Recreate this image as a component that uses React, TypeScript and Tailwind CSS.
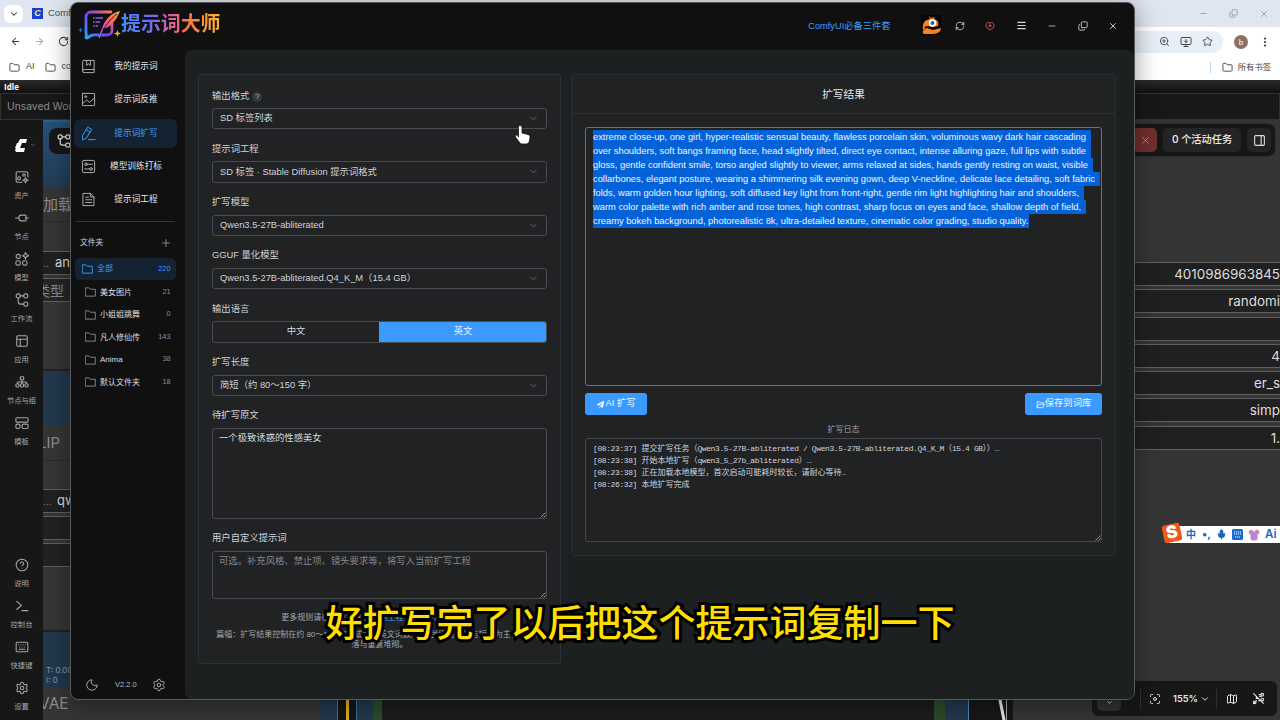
import React from "react";
import {
  ArrowLeft, ArrowRight, RotateCw, ChevronDown, Folder, ZoomIn, MonitorDown, Star, MoreVertical, X, Minus,
  PanelsTopLeft, HelpCircle, Keyboard, Settings, PanelRight,
  Map as MapIcon, Menu, RefreshCw, Copy, Plus, Moon, Mic, Shirt, Focus,
} from "lucide-react";

const ic = { fill: "none", stroke: "currentColor", strokeLinecap: "round", strokeLinejoin: "round" } as const;

function NavIcon({ kind }: { kind: string }) {
  return (
    <svg viewBox="0 0 16 16" width="15" height="15" {...ic} strokeWidth="1">
      {kind === "book" && (<><path d="M3 1.500h11v13H3.200A1.400 1.400 0 0 1 1.800 13V2.700C1.800 2 2.300 1.500 3 1.500z" /><path d="M1.800 12.600c0-.8.6-1.400 1.400-1.400H14M6 1.500v5.300l2-1.600 2 1.600V1.500" /></>)}
      {kind === "image" && (<><rect x="1.500" y="1.500" width="13" height="13" rx=".5" /><path d="M1.500 12.500l4.500-4 3 2.500 5.500-4.500" /><circle cx="5" cy="5" r="1" /></>)}
      {kind === "edit" && (<><path d="M7.500 1.500l4 2-6 9.700-3.700 1.600-.2-4z M5.800 4.400l4 2.200M8 14.500h7" /></>)}
      {kind === "train" && (<><rect x="1.500" y="1.500" width="13" height="13" rx="1.500" /><circle cx="5.300" cy="5.600" r="1.400" /><circle cx="10.700" cy="10.600" r="1.400" /><path d="M6.700 5.600h5.500M3.800 10.600h5.500" /></>)}
      {kind === "doc" && (<><path d="M2.500 1.500h7.500l3.800 3.800v9.200H2.500zM10 1.500v3.800h3.800M5 5.500h3M5 8.300h6.500M5 11.200h6.500" /></>)}
    </svg>
  );
}

const nav = [
  ["book", "我的提示词"], ["image", "提示词反推"], ["edit", "提示词扩写"], ["train", "模型训练打标"], ["doc", "提示词工程"],
];
const folders: [string, string][] = [["美女图片", "21"], ["小姐姐跳舞", "0"], ["凡人修仙传", "143"], ["Anima", "38"], ["默认文件夹", "18"]];

function FolderIcon() {
  return (
    <svg viewBox="0 0 16 14" width="11" height="10" {...ic} strokeWidth="1.300">
      <path d="M1 1h5l1.800 2H15v10H1z" />
    </svg>
  );
}

function Field({ label, children, tip }: { label: string; children: React.ReactNode; tip?: boolean }) {
  return (
    <div className="mb-[12px]">
      <div className="mb-[4px] flex h-[16px] items-center pt-[1px] text-[9.33px] text-[#cfd3dc]">
        {label}
        {tip && <span className="ml-[3px] flex h-[10px] w-[10px] items-center justify-center rounded-full bg-[#36383a] text-[8px] text-[#b5b8bd]">?</span>}
      </div>
      {children}
    </div>
  );
}

function Select({ value }: { value: string }) {
  return (
    <div className="flex h-[21.33px] items-center justify-between rounded-[3px] border border-[#4a4c50] pl-[7px] pr-[7px] pt-[1px] text-[9.33px] text-[#cfd3dc]">
      <span className="whitespace-pre">{value}</span>
      <ChevronDown size={11} strokeWidth={1.500} className="-mt-px text-[#85888e]" />
    </div>
  );
}

function Grip() {
  return (
    <svg width="6" height="6" viewBox="0 0 6 6" className="self-end" stroke="#b0b0b0" strokeWidth=".8"><path d="M0.500 5.500l5-5M3.500 5.500l2-2" /></svg>
  );
}

const lines: [string, string, string][] = [
  ["extreme close-up, one girl, hyper-realistic sensual beauty, flawless porcelain skin, voluminous wavy dark hair cascading", "w-[493px]", "w-[498px]"],
  ["over shoulders, soft bangs framing face, head slightly tilted, direct eye contact, intense alluring gaze, full lips with subtle", "w-[493px]", "w-[498px]"],
  ["gloss, gentle confident smile, torso angled slightly to viewer, arms relaxed at sides, hands gently resting on waist, visible", "w-[495px]", "w-[500px]"],
  ["collarbones, elegant posture, wearing a shimmering silk evening gown, deep V-neckline, delicate lace detailing, soft fabric", "w-[502px]", "w-[507px]"],
  ["folds, warm golden hour lighting, soft diffused key light from front-right, gentle rim light highlighting hair and shoulders,", "w-[486px]", "w-[491px]"],
  ["warm color palette with rich amber and rose tones, high contrast, sharp focus on eyes and face, shallow depth of field,", "w-[488px]", "w-[493px]"],
  ["creamy bokeh background, photorealistic 8k, ultra-detailed texture, cinematic color grading, studio quality.", "w-[435px]", "w-[436px]"],
];

function M({ children }: { children: string }) {
  return <span className="whitespace-pre tracking-[-0.4px]">{children}</span>;
}

function AppWindow() {
  return (
    <div className="absolute left-[70px] top-[2px] flex h-[698px] w-[1065px] flex-col overflow-hidden rounded-[8px] border border-[#58595a] bg-[#101010] font-['Liberation_Sans','Noto_Sans_CJK_SC',sans-serif] shadow-[0_4px_24px_rgba(0,0,0,0.4)]">
      <header className="flex h-[47px] shrink-0 items-center justify-between pl-[7px] pr-[16px]">
        <div className="flex items-center">
          <svg width="44" height="34" viewBox="0 0 44 34" fill="none" className="-mt-[4px]">
            <defs>
              <linearGradient id="frame" x1="0" y1="1" x2="1" y2="0"><stop stopColor="#22aaff" /><stop offset=".5" stopColor="#7b3df0" /><stop offset="1" stopColor="#ff7a4a" /></linearGradient>
              <linearGradient id="quill" x1="0" y1="1" x2="1" y2="0"><stop stopColor="#e33fd0" /><stop offset=".5" stopColor="#ff6a50" /><stop offset="1" stopColor="#ffb52e" /></linearGradient>
            </defs>
            <path d="M33 4H13c-3 0-5 2-5 5v15c0 2 1 3 0 5 0 2 2 1 4-1 3-2 6-1 9-1h8c3 0 5-2 5-5v-6" stroke="url(#frame)" strokeWidth="2.800" strokeLinecap="round" />
            <path d="M15 10h10M15 14h7M15 18h5" stroke="#8a5cf5" strokeWidth="1.400" strokeDasharray="1.500 1 8" />
            <path d="M42 3c-9 2-16 9-18 18 8-1 14-8 18-18z" fill="url(#quill)" />
            <path d="M39 6c-7 5-13 13-17 23" stroke="#2a1040" strokeWidth="1" />
            <path d="M21 30l3.500-9" stroke="#7d7bff" strokeWidth="1.300" />
            <path d="M2.500 19.500l.6 1.900 1.900.6-1.900.6-.6 1.900-.6-1.900L0 22l1.900-.6z" fill="#238dff" />
            <path d="M39.500 22l.9 2.600 2.600.9-2.600.9-.9 2.600-.9-2.600-2.600-.9 2.600-.9z" fill="#ffad2c" />
          </svg>
          <span className="-ml-[1px] -mt-[4px] bg-[linear-gradient(90deg,#3f8cff_0%,#6a6cf2_30%,#e0609a_52%,#ff7a3c_68%,#ffb12e_100%)] bg-clip-text text-[19.9px] font-bold text-transparent">提示词大师</span>
        </div>
        <div className="flex items-center text-[#d5d5d5]">
          <span className="mr-[30px] text-[9.25px] text-[#409eff]">ComfyUI必备三件套</span>
          <svg width="20" height="20" viewBox="0 0 20 20" className="mr-[14px] -mt-[3px]">
            <rect width="20" height="20" rx="2" fill="#050505" />
            <path d="M8 .5l2 2.500 4-1-1 2c4 1 5 4 4 7l-5 1-5-1-4 1 2 2-3 1C1 10 3 6 6 5l3-1z" fill="#f58220" />
            <path d="M3 15l3-2 6 2 8-2c0 3-3 6-8 6H3C1 18 1 16 3 15z" fill="#f58220" />
            <circle cx="11.500" cy="8" r="3.700" fill="#fff" /><circle cx="11.500" cy="8" r="2" fill="#1b62b4" />
          </svg>
          <div className="-mt-[2px] flex items-center gap-[20.500px]">
            <RefreshCw size={10} strokeWidth={2} />
            <svg width="10" height="10" viewBox="0 0 20 20" {...ic} strokeWidth="1.900" stroke="#e05252"><path d="M10 4C8 1.500 2 2.500 2 8.500c0 5 4 7.500 8 9.500 4-2 8-4.500 8-9.500C18 2.500 12 1.500 10 4zM10 7v5M7.500 9.500h5" /></svg>
            <Menu size={11} strokeWidth={2.600} />
            <Minus size={10} strokeWidth={1.800} />
            <Copy size={10} strokeWidth={2} className="-scale-y-100" />
            <X size={10} strokeWidth={2.200} />
          </div>
        </div>
      </header>
      <div className="flex min-h-0 flex-1">
        <aside className="flex w-[114px] shrink-0 flex-col pl-[3px]">
          <nav className="flex flex-col gap-[4.330px] pt-[2px]">
            {nav.map(([k, t], i) => (
              <div key={k} className={"flex h-[29px] w-[103px] items-center rounded-[6px] pl-[7px] text-[8.670px] " + (i === 2 ? "bg-[#142231] text-[#409eff]" : "text-[#e3e6eb]")}>
                <span className={i === 2 ? "" : "text-[#b3b6ba]"}><NavIcon kind={k} /></span>
                <span className="flex-1 pr-px text-center">{t}</span>
              </div>
            ))}
          </nav>
          <div className="ml-[2px] mt-[6.500px] w-[99px] border-t border-[#36383a]" />
          <div className="mt-[13px] flex h-[16px] items-center justify-between pl-[6px] pr-[13px] text-[7.700px] text-[#d0d3d8]">
            文件夹<Plus size={12} strokeWidth={1.500} className="text-[#a3a6ad]" />
          </div>
          <div className="ml-px mt-[7.500px] flex h-[21.500px] w-[101px] items-center rounded-[5px] bg-[#142231] pl-[7px] pr-[5.500px] text-[8px] text-[#409eff]">
            <FolderIcon /><span className="ml-[4px] flex-1">全部</span><span className="text-[7.300px]">220</span>
          </div>
          <div className="mt-px flex flex-col">
            {folders.map(([n, c]) => (
              <div key={n} className="ml-px flex h-[22.600px] w-[101px] items-center pl-[10px] pr-[5.500px] text-[8px] text-[#dcdfe5]">
                <span className="text-[#8b8e94]"><FolderIcon /></span><span className="ml-[4px] flex-1 pt-px">{n}</span><span className="text-[7.300px] text-[#8b8e94]">{c}</span>
              </div>
            ))}
          </div>
          <div className="mb-[7px] mt-auto flex items-center pl-[11px] text-[8px] text-[#b8bbc0]">
            <Moon size={14} strokeWidth={1.500} /><span className="ml-[16px] w-[31px] text-[7.500px]">V2.2.0</span><Settings size={14} strokeWidth={1.500} className="ml-[6px]" />
          </div>
        </aside>
        <main className="flex flex-1 items-start gap-[10px] rounded-l-[6px] rounded-tr-[6px] bg-[#1d2021] pl-[13px] pt-[24px]">
          <section className="h-[590px] w-[363px] shrink-0 rounded-[3px] border border-[#303335] bg-[#212224] px-[13px] pt-[13px]">
            <Field label="输出格式" tip><Select value="SD 标签列表" /></Field>
            <Field label="提示词工程"><Select value="SD 标签 · Stable Diffusion 提示词格式" /></Field>
            <Field label="扩写模型"><Select value="Qwen3.5-27B-abliterated" /></Field>
            <Field label="GGUF 量化模型"><Select value="Qwen3.5-27B-abliterated.Q4_K_M（15.4 GB）" /></Field>
            <Field label="输出语言">
              <div className="flex h-[21.330px] overflow-hidden rounded-[3px] border border-[#4a4c50] text-[9.330px] text-[#d6d9de]">
                <span className="flex w-[166px] items-center justify-center pt-px">中文</span>
                <span className="-my-px -mr-px flex flex-1 items-center justify-center bg-[#3b9aff] pt-px text-[#e9f4ff]">英文</span>
              </div>
            </Field>
            <Field label="扩写长度"><Select value="简短（约 80～150 字）" /></Field>
            <Field label="待扩写原文">
              <div className="flex h-[90.670px] justify-between rounded-[3px] border border-[#4a4c50] pl-[6px] pt-[3px] text-[9.330px] text-[#d6d9de]">一个极致诱惑的性感美女<Grip /></div>
            </Field>
            <Field label="用户自定义提示词">
              <div className="flex h-[48px] justify-between rounded-[3px] border border-[#4a4c50] pl-[6px] pt-[3px] text-[9.330px] text-[#85888e]">可选。补充风格、禁止项、镜头要求等，将写入当前扩写工程<Grip /></div>
            </Field>
            <p className="text-center text-[8px] leading-[13px] text-[#a3a6ad]">更多规则请在左侧菜单 <span className="text-[#409eff]">提示词工程</span> 中查看并编辑维护。</p>
            <p className="-mx-[4px] mt-[6px] whitespace-nowrap text-center text-[8px] leading-[10.670px] text-[#a3a6ad]">篇幅：扩写结果控制在约 80～150 字（或等量英文词数），以关键信息词与短句为主，避免段<br />落与重复堆砌。</p>
          </section>
          <section className="h-[482px] w-[545px] shrink-0 rounded-[3px] border border-[#2b2e30] bg-[#212224]">
            <h2 className="flex h-[38.500px] items-center justify-center border-b border-[#2d3032] text-[10.670px] text-[#e5eaf3]">扩写结果</h2>
            <div className="px-[13px] pt-[13px]">
              <div className="flex h-[259px] justify-between rounded-[3px] border border-[#3a7cc6] pl-[7px] pt-[2px]">
                <div className="text-[9.330px] leading-[14px] text-[#f0f6ff]">
                  {lines.map(([t, w, bg]) => (
                    <div key={t} className={"h-[14px] bg-[#0462d8] " + bg}><div className={"whitespace-nowrap [text-align-last:justify] " + w}>{t}</div></div>
                  ))}
                </div>
                <Grip />
              </div>
              <div className="mt-[7.500px] flex h-[21.500px] justify-between text-[9.330px] text-[#f1f8ff]">
                <span className="flex w-[62px] items-center justify-center rounded-[3px] bg-[#3b9aff] pt-px">
                  <svg width="9" height="9" viewBox="0 0 16 16" fill="currentColor"><path d="M15 1L1 8l4 2 7-6-5 7 5 3zM6 12v3l2-2z" /></svg>AI 扩写
                </span>
                <span className="flex w-[77px] items-center justify-center rounded-[3px] bg-[#3b9aff] pt-px">
                  <svg width="9" height="9" viewBox="0 0 16 16" {...ic} strokeWidth="1.400"><path d="M2 13V3h4l2 2h5v2.500M2 13l2.500-5.500H15L12.500 13z" /></svg>保存到词库
                </span>
              </div>
              <div className="mt-[9px] flex h-[13px] items-center justify-center text-[8px] text-[#a3a6ad]">扩写日志</div>
              <div className="mt-[1.500px] flex h-[103.500px] justify-between rounded-[3px] border border-[#45474b] pl-[7px] pt-[3.500px]">
                <div className="whitespace-nowrap font-['Liberation_Mono','Noto_Sans_CJK_SC',monospace] text-[8px] leading-[12px] text-[#cfd3dc]">
                  <div><M>[08:23:37] </M>提交扩写任务（<M>Qwen3.5-27B-abliterated / Qwen3.5-27B-abliterated.Q4_K_M</M>（<M>15.4 GB</M>））<M>…</M></div>
                  <div><M>[08:23:38] </M>开始本地扩写（<M>qwen3_5_27b_abliterated</M>）<M>…</M></div>
                  <div><M>[08:23:38] </M>正在加载本地模型，首次启动可能耗时较长，请耐心等待<M>…</M></div>
                  <div><M>[08:26:32] </M>本地扩写完成</div>
                </div>
                <Grip />
              </div>
            </div>
          </section>
        </main>
      </div>
    </div>
  );
}

const glyphs: Record<string, React.ReactNode> = {
  资产: <><path d="M12 21H4a2 2 0 0 1-2-2V5a2 2 0 0 1 2-2h16a2 2 0 0 1 2 2v7" /><circle cx="15.500" cy="8.500" r="2" /><circle cx="7" cy="14" r="2.500" /><path d="M18 13l1.200 3.300L22.500 17.500l-3.300 1.200L18 22l-1.200-3.300-3.300-1.200 3.300-1.200z" /></>,
  节点: <path d="M1 12h5M18 12h5M17 7h-6c-6 0-6 10 0 10h6M17 7c2 0 3 2 1 5M17 17c2 0 3-2 1-5" />,
  模型: <><rect x="2" y="4" width="7" height="7" rx="3" /><rect x="1.500" y="15" width="7.500" height="7.500" rx="3" /><rect x="13" y="15" width="7.500" height="7.500" rx="3" /><path d="M18 1l1.600 3.900L23.500 6.500l-3.900 1.600L18 12l-1.600-3.900-3.900-1.600 3.900-1.600z" /></>,
  工作流: <><rect x="2" y="1.500" width="7" height="7" rx="3" /><rect x="15" y="1.500" width="7" height="7" rx="3" /><rect x="15" y="15.500" width="7" height="7" rx="3" /><path d="M9 5h6M5.500 8.500V15c0 3 1 4 4 4H15" /></>,
  节点与组: <><rect x="9" y="3" width="6" height="5.500" rx="1.500" /><rect x="1.500" y="15" width="5.500" height="5.500" rx="2" /><rect x="9.200" y="15" width="5.500" height="5.500" rx="2" /><rect x="17" y="15" width="5.500" height="5.500" rx="2" /><path d="M12 8.500V15M4.500 15v-3h15v3" /></>,
  模板: <><rect x="1.500" y="3" width="21" height="7.500" rx="2" /><rect x="1.500" y="14" width="7" height="7.500" rx="2.500" /><rect x="12" y="14" width="10.500" height="7.500" rx="2.500" /></>,
  控制台: <path d="M3 4l8 7-8 7M12 20h10" />,
};

const side = ["资产", "节点", "模型", "工作流", "应用", "节点与组", "模板"];
const sideBottom = ["说明", "控制台", "快捷键", "设置"];
const packaged: Record<string, any> = { 应用: PanelsTopLeft, 说明: HelpCircle, 快捷键: Keyboard, 设置: Settings };

function SideItem({ label }: { label: string }) {
  const Icon = packaged[label];
  return (
    <div className="flex h-[41px] flex-col items-center text-[#a6a6a6]">
      {Icon ? <Icon size={14} strokeWidth={1.800} /> : (
        <svg width="14" height="14" viewBox="0 0 24 24" {...ic} strokeWidth="1.900">{glyphs[label]}</svg>
      )}
      <span className="mt-[5px] whitespace-nowrap text-[7.300px] leading-[14px]">{label}</span>
    </div>
  );
}

const rightRows: [string, string][] = [
  ["top-[142px]", "4010986963845"], ["top-[169px]", "randomi"], ["top-[197px]", ""], ["top-[224px]", "4"], ["top-[251px]", "er_s"], ["top-[278px]", "simp"], ["top-[306px]", "1."],
];

function Backdrop() {
  return (
    <div className="flex h-full flex-col">
      <div className="flex h-[27px] shrink-0 items-center bg-[#dfe6ef] pl-[4px] text-[#333]">
        <span className="flex h-[18px] w-[19px] items-center justify-center rounded-[6px] bg-white"><ChevronDown size={10} strokeWidth={2.500} /></span>
        <span className="ml-[9px] flex h-[11px] w-[11px] items-center justify-center bg-[#1b3fd0] text-[9px] font-bold italic leading-none text-[#f0f050]">C</span>
        <span className="ml-[5px] text-[9.500px] text-[#4a4d52]">ComfyUI</span>
        <div className="ml-auto flex items-center gap-[21px] pr-[11px] text-[#8e9297]"><Minus size={9} strokeWidth={2} /><Copy size={9} strokeWidth={2} className="-scale-y-100" /><X size={10} strokeWidth={1.800} /></div>
      </div>
      <div className="flex h-[29px] shrink-0 items-center bg-white pl-[10px] text-[#444]">
        <ArrowLeft size={11} strokeWidth={2.200} /><ArrowRight size={11} strokeWidth={2.200} className="ml-[13px] text-[#aaa]" /><RotateCw size={11} strokeWidth={2.200} className="ml-[13px]" />
        <div className="ml-auto flex h-[22px] w-[400px] items-center justify-end gap-[10px] rounded-full bg-[#e9eff8] pr-[10px]"><ZoomIn size={11} /><MonitorDown size={12} /><Star size={11} /></div>
        <span className="ml-[11px] flex h-[14px] w-[14px] items-center justify-center rounded-full bg-[#8d6e63] font-['Lato'] text-[8px] text-white">b</span>
        <MoreVertical size={12} strokeWidth={2.500} className="ml-[11px] mr-[9px]" />
      </div>
      <div className="flex h-[24px] shrink-0 items-center bg-white pb-[2px] pl-[9px] text-[9px] text-[#444]">
        <Folder size={11} /><span className="ml-[6px]">AI</span><Folder size={11} className="ml-[10px]" /><span className="ml-[6px]">comfy</span>
        <span className="ml-auto h-[11px] border-l border-[#b9d3f4]" /><Folder size={11} className="ml-[11px]" /><span className="ml-[5px] mr-[9px] text-[8.300px]">所有书签</span>
      </div>
      <div className="flex h-[13px] shrink-0 items-center bg-gradient-to-b from-[#2b2b2b] to-[#111] pl-[4px] pt-px font-['Open_Sans'] text-[8px] font-bold text-white">Idle</div>
      <div className="flex h-[27px] shrink-0 items-center border border-[#323232] bg-[#181818] pl-[6px] font-['Inter'] text-[10.300px] text-[#8b8b8b]">Unsaved Workflow</div>
      <div className="flex min-h-0 flex-1">
        <div className="flex w-[43px] shrink-0 flex-col bg-[#171717]">
          <div className="flex h-[50px] items-center gap-[3px] pl-[15px] text-[#888]">
            <svg width="12" height="13" viewBox="0 0 12 13" fill="#fff"><path d="M5 0h7l-1 4H7L5 9h5l-1 4H1L0 11 1 9H0L2 4h1z" /></svg><ChevronDown size={6} strokeWidth={2.500} />
          </div>
          {side.map((l) => <SideItem key={l} label={l} />)}
          <div className="mt-auto -mb-[2px]">{sideBottom.map((l) => <SideItem key={l} label={l} />)}</div>
        </div>
        <div className="relative flex-1 overflow-hidden bg-[#353535] font-['Inter','Noto_Sans_CJK_SC',sans-serif]">
          <div className="absolute left-0 top-0 h-[67px] w-[40px] border-t-2 border-[#2d5f8a] bg-gradient-to-b from-[#24527a] to-[#223d55]" />
          <div className="absolute left-[6px] top-[8px] flex h-[26px] w-[60px] items-center rounded-[8px] bg-[#171717] pl-[8px] text-[#e5e5e5]">
            <svg width="14" height="14" viewBox="0 0 24 24" {...ic} strokeWidth="2.100">{glyphs["工作流"]}</svg>
          </div>
          <span className="absolute left-0 top-[74px] text-[15px] text-[#8c8c8c]">加载</span>
          <div className="absolute left-0 top-[101px] h-px w-[28px] bg-[#2a2a2a]" />
          <div className="absolute left-0 top-[131px] flex h-[24px] w-[40px] items-center border-y border-[#606060] bg-[#202020] text-[13px] text-[#dedede]"><span className="w-[12px] text-[10px] text-[#888]">..</span>an</div>
          <div className="absolute left-0 top-[158px] flex h-[24px] w-[40px] items-center border-y border-[#606060] bg-[#262626]"><span className="-ml-[7px] text-[14px] text-[#8a8a8a]">类型</span></div>
          <div className="absolute left-0 top-[249px] h-[56px] w-[28px] border-t-2 border-[#222] bg-[#22384d]" />
          <span className="absolute -left-[5px] top-[312px] text-[15px] text-[#8c8c8c]">LIP</span>
          <div className="absolute left-0 top-[340px] h-px w-[28px] bg-[#2a2a2a]" />
          <div className="absolute left-0 top-[369px] flex h-[24px] w-[40px] items-center border-y border-[#606060] bg-[#202020] text-[13px] text-[#dedede]"><span className="w-[14px] shrink-0 text-[10px] text-[#888]">...</span>qwen</div>
          <div className="absolute left-0 top-[396px] h-[24px] w-[40px] border-y border-[#606060] bg-[#222]" />
          <div className="absolute left-0 top-[423px] h-[24px] w-[40px] border-y border-[#606060] bg-[#222]" />
          <div className="absolute left-0 top-[510px] h-[57px] w-[28px] whitespace-nowrap border-t-2 border-[#222] bg-[#22384d] pl-[3px] pt-[34px] text-[8px] leading-[9.500px] text-[#8398aa]">T: 0.00s<br />I: 0</div>
          <span className="absolute -left-[4px] top-[572px] text-[15.500px] text-[#8c8c8c]">VAE</span>

          <div className="absolute left-[277px] top-[575px] flex h-[30px]">
            <div className="w-[17px] bg-[#22384d]" /><div className="flex w-[20px] justify-center border-x border-[#3b6f9a] bg-[#151515]"><span className="w-[3px] bg-[#e0b020]" /></div><div className="w-[16px] bg-[#22384d]" /><div className="w-[9px] bg-[#2b4a2c]" />
            <div className="w-[552px] bg-[#1c1c1c]" /><div className="w-[11px] bg-[#2b4a2c]" /><div className="w-[24px] border-r border-[#4d88b8] bg-[#22384d]" /><div className="w-[44px] bg-[#171717]" />
          </div>
          <svg className="absolute left-[950px] top-[575px]" width="20" height="25"><path d="M6 0l5 25" stroke="#e8e8e8" strokeWidth="3" /><path d="M13.500 0v25" stroke="#aaa" /></svg>

          <div className="absolute left-[1040px] top-[3px] flex h-[34px] w-[193px] items-center justify-end gap-[6px] rounded-[8px] border border-[#2d2d2d] bg-[#171717] pr-[4px] text-[#e0e0e0]">
            <span className="flex h-[24px] w-[24px] items-center justify-center rounded-[5px] bg-[#702f2f] text-[#bd8b8b]"><X size={11} strokeWidth={2} /></span>
            <span className="flex h-[24px] w-[78px] items-center justify-center whitespace-nowrap rounded-[5px] bg-[#242424] text-[10.200px] font-medium text-[#f0f0f0]">0 个活动任务</span>
            <span className="flex h-[24px] w-[24px] items-center justify-center rounded-[5px] bg-[#242424]"><PanelRight size={13} /></span>
          </div>
          {rightRows.map(([p, t]) => (
            <div key={p} className={"absolute left-[1060px] flex h-[24px] w-[177px] items-center justify-end border-y border-[#606060] bg-[#202020] text-[13.400px] text-[#dedede] " + p}>{t}</div>
          ))}
          <div className="absolute left-[1126px] top-[406px] flex h-[17px] w-[120px] items-center gap-[5px] bg-white pl-[17px] text-[#1469c0]">
            <span className="text-[10px] font-bold">中</span><span className="ml-[1px] w-[9px] text-[11px] font-bold leading-none">•,</span><Mic size={11} fill="currentColor" />
            <svg width="11" height="11" viewBox="0 0 11 11"><rect width="11" height="11" rx="1.500" fill="#1469d8" /><path d="M2 3h7M2 5h7M3 8h5" stroke="#fff" strokeDasharray="1.200 .8" /></svg>
            <Shirt size={12} fill="#a785f5" className="text-[#f08080]" /><span className="text-[11.500px] font-semibold">Ai</span>
          </div>
          <div className="absolute left-[1120px] top-[404px] flex h-[18px] w-[18px] -rotate-12 items-center justify-center rounded-[3px] bg-[#ef5a1c] text-[17px] font-black text-white">S</div>
          <div className="absolute left-[1049px] top-[561px] flex h-[35px] w-[185px] items-center rounded-[6px] bg-[#171717] pl-[5px] text-[#e5e5e5]">
            <span className="flex h-[24px] w-[24px] items-center justify-center rounded-[5px] bg-[#303030] pt-[8px]"><ChevronDown size={7} strokeWidth={3} /></span>
            <span className="ml-[19px] h-[20px] border-l border-[#303030]" />
            <Focus size={12} className="ml-[8px]" /><span className="ml-[12px] w-[23px] text-[9.300px] font-semibold">155%</span><ChevronDown size={10} strokeWidth={2.300} className="ml-[4px]" />
            <span className="ml-[6px] h-[20px] border-l border-[#303030]" /><MapIcon size={12} className="ml-[9px]" />
            <svg width="13" height="13" viewBox="0 0 24 24" {...ic} strokeWidth="2" className="ml-[14px]"><path d="M3 3l18 18M3 21l5-5M14 8h3M8 8v4h4M12 16h5M13 5l4-1" /><circle cx="19" cy="5" r="2.500" /><circle cx="5" cy="19" r="2.500" /><circle cx="19" cy="14" r="2.500" /></svg>
          </div>
        </div>
      </div>
    </div>
  );
}

export default function App() {
  return (
    <div className="relative h-[720px] w-[1280px] overflow-hidden bg-[#353535] font-['Liberation_Sans','Noto_Sans_CJK_SC',sans-serif]">
      <Backdrop />
      <AppWindow />
      <svg className="absolute left-[514px] top-[124px]" width="17" height="21" viewBox="0 0 17 21"><path d="M6 1.500c1.500 0 2 .8 2 2V9l6 1.500c1.700.5 2.200 1.500 2 3l-.8 4c-.4 1.600-1.500 2.500-3 2.500H8.500c-1.500 0-2.500-.7-3.300-2L1.500 13c-.8-1.500.8-2.700 2-1.500L4.500 13V3.500c0-1.200.3-2 1.500-2z" fill="#fff" stroke="#111" strokeWidth=".8" /></svg>
      <div className="absolute left-0 top-[593px] w-[1280px] whitespace-nowrap text-center font-['Noto_Sans_CJK_SC',sans-serif] text-[37px] font-medium leading-[56px] text-[#ffdf00] [-webkit-text-stroke:6px_#000] [paint-order:stroke_fill]">好扩写完了以后把这个提示词复制一下</div>
    </div>
  );
}
